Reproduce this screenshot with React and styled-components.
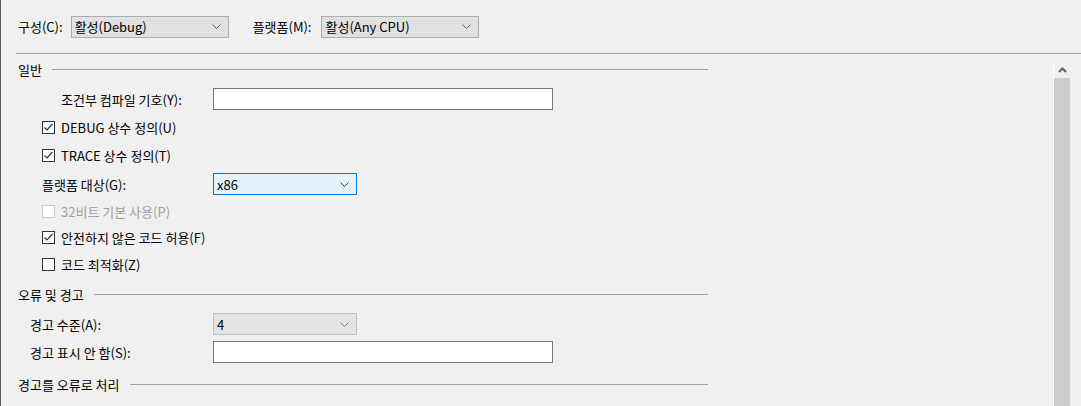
import React from 'react';
import styled, { createGlobalStyle } from 'styled-components';

const GlobalStyle = createGlobalStyle`
  html, body {
    margin: 0;
    padding: 0;
    background: #f0f0f0;
  }
  body {
    font-family: "Segoe UI", "Noto Sans CJK KR", "Noto Sans", sans-serif;
    font-size: 13px;
    color: #000;
  }
`;

const Page = styled.div`
  width: 1081px;
  height: 406px;
  box-sizing: border-box;
  border-left: 1px solid #5a5a5a;
  display: flex;
  flex-direction: column;
  overflow: hidden;
`;

const Toolbar = styled.div`
  height: 53px;
  margin-left: 15px;
  padding-left: 2px;
  border-bottom: 1px solid #a0a0a0;
  display: flex;
  align-items: center;
  flex-shrink: 0;
`;

const ToolLabel = styled.span`
  margin-right: ${p => p.gap}px;
  margin-left: ${p => p.offset || 0}px;
`;

const Body = styled.div`
  flex: 1;
  display: flex;
`;

const Content = styled.div`
  width: 690px;
  padding-left: 17px;
  display: flex;
  flex-direction: column;
`;

const Row = styled.div`
  height: ${p => p.h}px;
  display: flex;
  align-items: center;
  padding-left: ${p => p.indent || 0}px;
  flex-shrink: 0;
`;

const HeaderText = styled.span`
  margin-right: 10px;
  white-space: nowrap;
`;

const HeaderLine = styled.div`
  flex: 1;
  height: 1px;
  background: #a0a0a0;
`;

const Label = styled.span`
  width: ${p => p.w}px;
  flex-shrink: 0;
  white-space: nowrap;
  color: ${p => (p.disabled ? '#a0a0a0' : '#000')};
`;

const TextBox = styled.div`
  width: 340px;
  height: 22px;
  box-sizing: border-box;
  background: #fff;
  border: 1px solid #7a7a7a;
`;

const Select = styled.div`
  width: ${p => p.w}px;
  height: 22px;
  box-sizing: border-box;
  display: flex;
  align-items: center;
  justify-content: space-between;
  padding: 0 7px 0 3px;
  background: ${p => (p.focused ? '#e5f1fb' : p.disabled ? '#e3e3e3' : '#e1e1e1')};
  border: 1px solid ${p => (p.focused ? '#0078d7' : p.disabled ? '#bfbfbf' : '#adadad')};
  color: #000;
`;

const CheckRow = styled.label`
  display: flex;
  align-items: center;
  gap: 6px;
  color: ${p => (p.disabled ? '#a0a0a0' : '#000')};
`;

const Box = styled.span`
  width: 13px;
  height: 13px;
  box-sizing: border-box;
  border: 1px solid ${p => (p.disabled ? '#cccccc' : '#333')};
  background: #fff;
  display: flex;
  align-items: center;
  justify-content: center;
`;

const Scrollbar = styled.div`
  margin-left: auto;
  margin-right: 11px;
  margin-top: 7px;
  width: 16px;
  border-left: 1px solid #fff;
  display: flex;
  flex-direction: column;
`;

const ScrollArrow = styled.div`
  height: 17px;
  display: flex;
  align-items: center;
  justify-content: center;
  background: #f0f0f0;
`;

const Thumb = styled.div`
  flex: 1;
  background: #cdcdcd;
`;

const Chevron = ({ color = '#606060' }) => (
  <svg width="9" height="5" viewBox="0 0 9 5">
    <polyline points="0.5,0.5 4.5,4.5 8.5,0.5" fill="none" stroke={color} strokeWidth="1" />
  </svg>
);

const Check = () => (
  <svg width="11" height="11" viewBox="0 0 11 11">
    <polyline points="1.5,5.5 4,8 9.5,2" fill="none" stroke="#333" strokeWidth="1.2" />
  </svg>
);

const Checkbox = ({ checked, disabled, children }) => (
  <CheckRow disabled={disabled}>
    <Box disabled={disabled}>{checked && <Check />}</Box>
    {children}
  </CheckRow>
);

const Header = ({ children }) => (
  <>
    <HeaderText>{children}</HeaderText>
    <HeaderLine />
  </>
);

export default function App() {
  return (
    <>
      <GlobalStyle />
      <Page>
        <Toolbar>
          <ToolLabel gap={8}>구성(C):</ToolLabel>
          <Select w={158}>
            <span>활성(Debug)</span>
            <Chevron />
          </Select>
          <ToolLabel gap={10} offset={24}>플랫폼(M):</ToolLabel>
          <Select w={158}>
            <span>활성(Any CPU)</span>
            <Chevron />
          </Select>
        </Toolbar>
        <Body>
          <Content>
            <Row h={30}><Header>일반</Header></Row>
            <Row h={30} indent={43}>
              <Label w={152}>조건부 컴파일 기호(Y):</Label>
              <TextBox />
            </Row>
            <Row h={26} indent={24}>
              <Checkbox checked>DEBUG 상수 정의(U)</Checkbox>
            </Row>
            <Row h={30} indent={24}>
              <Checkbox checked>TRACE 상수 정의(T)</Checkbox>
            </Row>
            <Row h={28} indent={24}>
              <Label w={171}>플랫폼 대상(G):</Label>
              <Select w={144} focused>
                <span>x86</span>
                <Chevron color="#404040" />
              </Select>
            </Row>
            <Row h={26} indent={24}>
              <Checkbox disabled>32비트 기본 사용(P)</Checkbox>
            </Row>
            <Row h={26} indent={24}>
              <Checkbox checked>안전하지 않은 코드 허용(F)</Checkbox>
            </Row>
            <Row h={28} indent={24}>
              <Checkbox>코드 최적화(Z)</Checkbox>
            </Row>
            <Row h={32}><Header>오류 및 경고</Header></Row>
            <Row h={28} indent={12}>
              <Label w={183}>경고 수준(A):</Label>
              <Select w={144} disabled>
                <span>4</span>
                <Chevron color="#808080" />
              </Select>
            </Row>
            <Row h={28} indent={12}>
              <Label w={183}>경고 표시 안 함(S):</Label>
              <TextBox />
            </Row>
            <Row h={36}><Header>경고를 오류로 처리</Header></Row>
          </Content>
          <Scrollbar>
            <ScrollArrow>
              <svg width="9" height="6" viewBox="0 0 9 6">
                <polyline points="1,5 4.5,1.5 8,5" fill="none" stroke="#606060" strokeWidth="2" />
              </svg>
            </ScrollArrow>
            <Thumb />
          </Scrollbar>
        </Body>
      </Page>
    </>
  );
}
